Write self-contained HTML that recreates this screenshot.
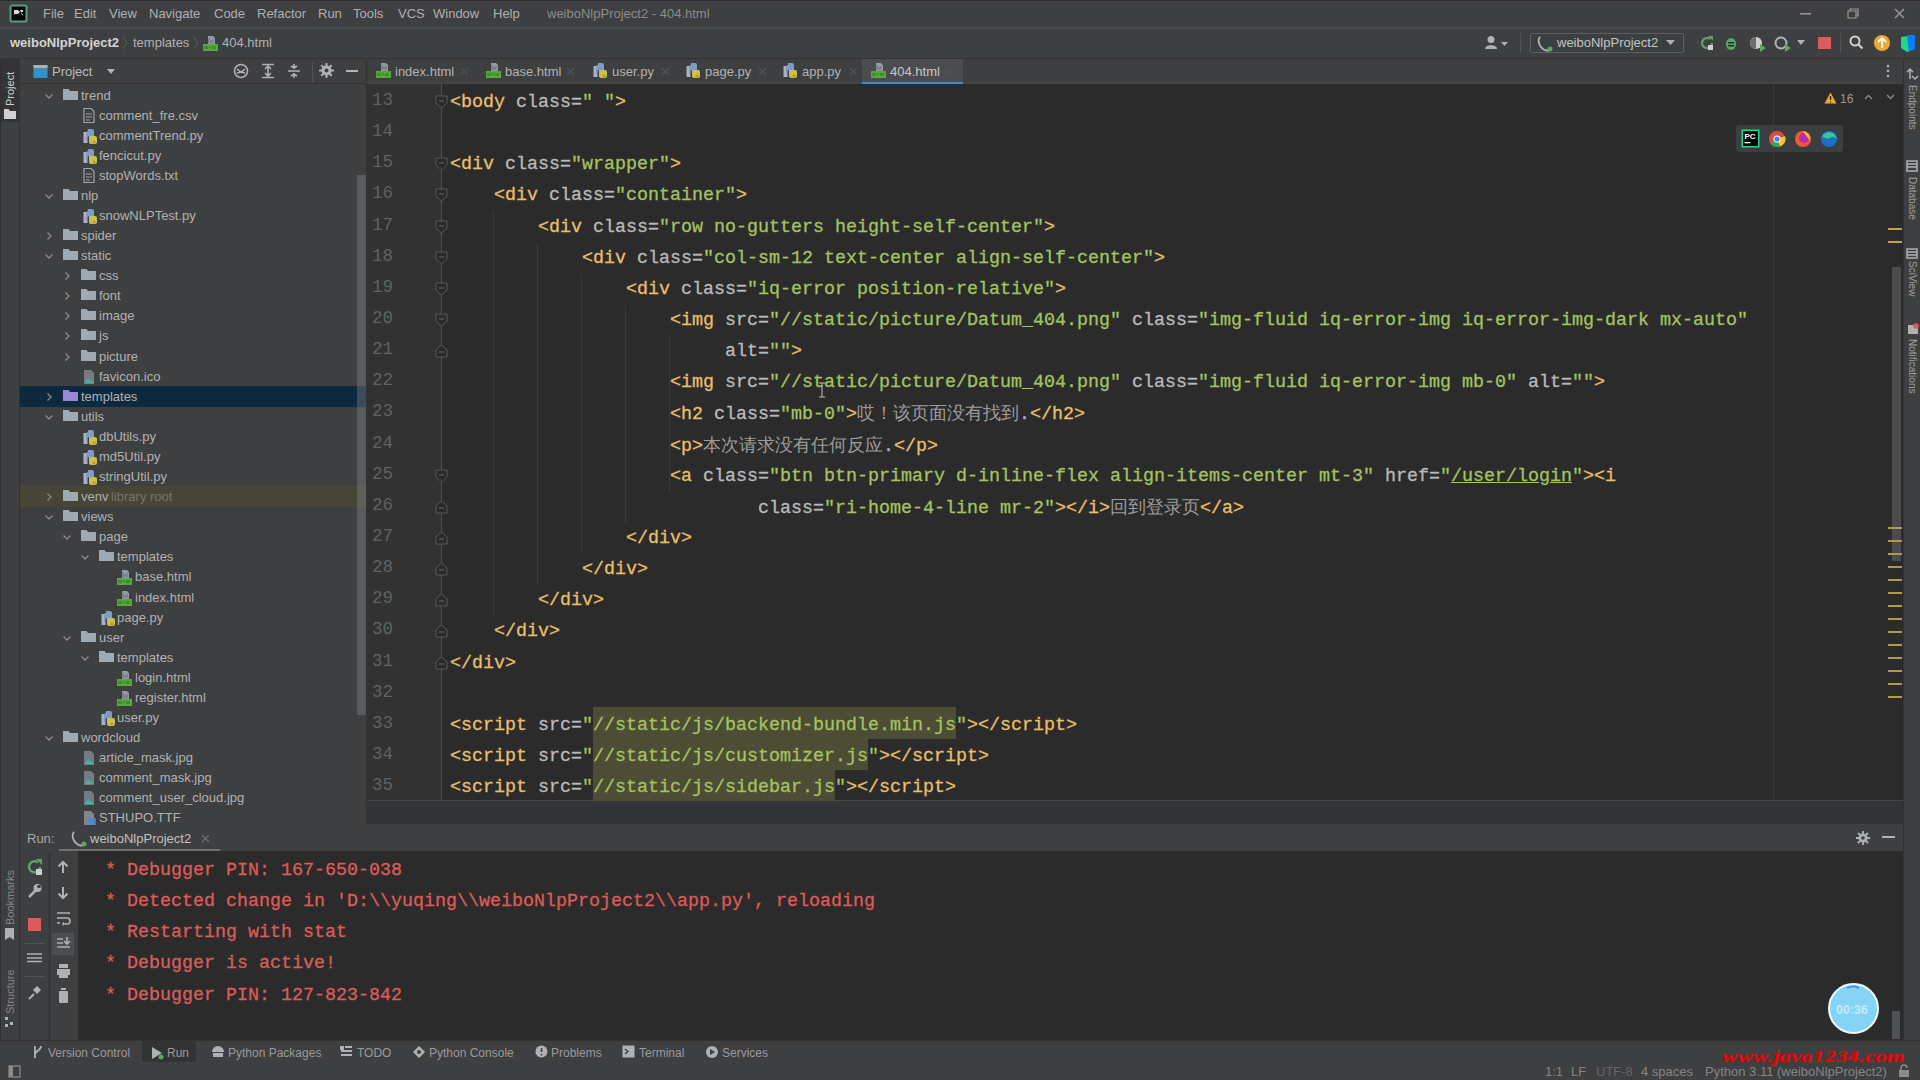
<!DOCTYPE html><html><head><meta charset="utf-8"><title>PyCharm</title><style>
*{margin:0;padding:0;box-sizing:border-box}
html,body{width:1920px;height:1080px;overflow:hidden;background:#3e3f41;font-family:"Liberation Sans",sans-serif;font-size:13px;color:#b2b2b2}
.a{position:absolute}
.t{position:absolute;white-space:pre;line-height:16px}
.s{position:absolute;overflow:visible}
.code{position:absolute;white-space:pre;font-family:"Liberation Mono",monospace;font-size:18.33px;line-height:31px;height:31px;-webkit-text-stroke:0.3px currentColor}
.tg{color:#e8bf6a}
.at{color:#bababa}
.vl{color:#a5c261}
.tx{color:#a9b7c6}
.cj{font-size:17.5px;font-family:"Liberation Serif",serif;-webkit-text-stroke:0;color:#9c9c9c}
.ln{position:absolute;font-family:"Liberation Mono",monospace;font-size:17.5px;color:#5f6265;width:40px;text-align:right;line-height:31px}
.con{position:absolute;white-space:pre;font-family:"Liberation Mono",monospace;font-size:18.33px;line-height:31px;color:#dc5c59;-webkit-text-stroke:0.3px currentColor}
.vt{position:absolute;white-space:pre;font-size:11px;line-height:12px;transform-origin:0 0}
</style></head><body>
<div class="a" style="left:0px;top:0px;width:1920px;height:1px;background:#2b2b2b;"></div>
<div class="a" style="left:0px;top:1px;width:1920px;height:27px;background:#3e3f41;"></div>
<div class="a" style="left:0px;top:1px;width:1920px;height:2px;background:#434447;"></div>
<div class="a" style="left:0px;top:27px;width:1920px;height:2px;background:#4a4b4d;"></div>
<div class="a" style="left:0px;top:29px;width:1920px;height:29px;background:#3e3f41;"></div>
<div class="a" style="left:0px;top:58px;width:1920px;height:1px;background:#323232;"></div>
<div class="a" style="left:0px;top:59px;width:20px;height:981px;background:#3e3f41;"></div>
<div class="a" style="left:0px;top:59px;width:1px;height:1021px;background:#2e3032;"></div>
<div class="a" style="left:19px;top:59px;width:1px;height:981px;background:#323232;"></div>
<div class="a" style="left:1px;top:59px;width:18px;height:63px;background:#333436;"></div>
<div class="a" style="left:20px;top:59px;width:346px;height:766px;background:#3e3f41;"></div>
<div class="a" style="left:20px;top:83px;width:346px;height:1px;background:#323232;"></div>
<div class="a" style="left:366px;top:59px;width:1537px;height:25px;background:#3e3f41;"></div>
<div class="a" style="left:366px;top:82px;width:1537px;height:2px;background:#434446;"></div>
<div class="a" style="left:366px;top:59px;width:1px;height:766px;background:#323232;"></div>
<div class="a" style="left:862px;top:59px;width:101px;height:24px;background:#4a4c4f;"></div>
<div class="a" style="left:862px;top:82px;width:101px;height:3px;background:#4a88c7;"></div>
<div class="a" style="left:367px;top:84px;width:75px;height:716px;background:#323233;"></div>
<div class="a" style="left:442px;top:84px;width:1461px;height:716px;background:#2b2b2b;"></div>
<div class="a" style="left:367px;top:800px;width:1536px;height:1px;background:#45484a;"></div>
<div class="a" style="left:367px;top:801px;width:1536px;height:23px;background:#323436;"></div>
<div class="a" style="left:20px;top:825px;width:1883px;height:26px;background:#3e3f41;"></div>
<div class="a" style="left:59px;top:849px;width:161px;height:2px;background:#6d6f71;"></div>
<div class="a" style="left:20px;top:851px;width:58px;height:189px;background:#3e3f41;"></div>
<div class="a" style="left:49px;top:851px;width:1px;height:189px;background:#323232;"></div>
<div class="a" style="left:78px;top:851px;width:1825px;height:189px;background:#2b2b2b;"></div>
<div class="a" style="left:52px;top:933px;width:22px;height:22px;background:#4b4e50;"></div>
<div class="a" style="left:1892px;top:1011px;width:8px;height:28px;background:#4e5254;"></div>
<div class="a" style="left:1903px;top:59px;width:17px;height:981px;background:#3e3f41;"></div>
<div class="a" style="left:1903px;top:59px;width:1px;height:981px;background:#323232;"></div>
<div class="a" style="left:0px;top:1040px;width:1920px;height:1px;background:#323232;"></div>
<div class="a" style="left:0px;top:1041px;width:1920px;height:39px;background:#3e3f41;"></div>
<div class="a" style="left:142px;top:1041px;width:54px;height:21px;background:#313335;"></div>
<svg class="s" style="left:9px;top:4px;" width="19" height="19" viewBox="0 0 19 19"><rect x="0.5" y="0.5" width="18" height="18" rx="2.5" fill="#5e9a82"/><rect x="2.5" y="2.5" width="14" height="14" fill="#020a06"/><path d="M5 11V6h4l2 2-2 2H6z M11 6h3v2h-2v2h2v2" fill="#d8d8d8"/></svg>
<div class="t" style="left:43px;top:6px;color:#b0b0b0">File</div>
<div class="t" style="left:74px;top:6px;color:#b0b0b0">Edit</div>
<div class="t" style="left:109px;top:6px;color:#b0b0b0">View</div>
<div class="t" style="left:149px;top:6px;color:#b0b0b0">Navigate</div>
<div class="t" style="left:214px;top:6px;color:#b0b0b0">Code</div>
<div class="t" style="left:257px;top:6px;color:#b0b0b0">Refactor</div>
<div class="t" style="left:318px;top:6px;color:#b0b0b0">Run</div>
<div class="t" style="left:353px;top:6px;color:#b0b0b0">Tools</div>
<div class="t" style="left:398px;top:6px;color:#b0b0b0">VCS</div>
<div class="t" style="left:433px;top:6px;color:#b0b0b0">Window</div>
<div class="t" style="left:493px;top:6px;color:#b0b0b0">Help</div>
<div class="t" style="left:547px;top:6px;color:#8c8c8c">weiboNlpProject2 - 404.html</div>
<svg class="s" style="left:1800px;top:13px;" width="12" height="3" viewBox="0 0 12 3"><rect width="11" height="1.5" fill="#9a9a9a"/></svg>
<svg class="s" style="left:1847px;top:8px;" width="13" height="11" viewBox="0 0 13 11"><path d="M1 3h8v7H1z M3 3V1h8v7H9" fill="none" stroke="#9a9a9a" stroke-width="1.2"/></svg>
<svg class="s" style="left:1894px;top:8px;" width="11" height="11" viewBox="0 0 11 11"><path d="M1 1l9 9M10 1l-9 9" stroke="#9a9a9a" stroke-width="1.4"/></svg>
<div class="t" style="left:10px;top:35px;color:#d4d4d4;font-weight:bold">weiboNlpProject2</div>
<svg class="s" style="left:122px;top:36px;" width="6" height="14" viewBox="0 0 6 14"><path d="M1 1l4 6-4 6" stroke="#5e6060" fill="none"/></svg>
<div class="t" style="left:133px;top:35px;">templates</div>
<svg class="s" style="left:193px;top:36px;" width="6" height="14" viewBox="0 0 6 14"><path d="M1 1l4 6-4 6" stroke="#5e6060" fill="none"/></svg>
<svg class="s" style="left:203px;top:35px;" width="15" height="16" viewBox="0 0 15 16"><path d="M5 1h5l2 2V9H5z" fill="#a7b0c0" opacity="0.8"/><path d="M6 3v5M8 5v3M10 4v4" stroke="#5a6070" stroke-width="0.8"/><rect x="0" y="9" width="15" height="7" fill="#56a83c"/><path d="M2 11v3M4 11v3M6 12h2M10 11v3M12 11v3" stroke="#2f5f22" stroke-width="0.8"/></svg>
<div class="t" style="left:222px;top:35px;">404.html</div>
<svg class="s" style="left:1484px;top:35px;" width="26" height="16" viewBox="0 0 26 16"><circle cx="7" cy="4.5" r="3.5" fill="#afb1b3"/><path d="M1 14c0-5 12-5 12 0z" fill="#afb1b3"/><path d="M17 7l3.5 4 3.5-4z" fill="#afb1b3"/></svg>
<div class="a" style="left:1520px;top:33px;width:1px;height:20px;background:#505254;"></div>
<div class="a" style="left:1530px;top:33px;width:154px;height:20px;background:#3c3f41;border:1px solid #5e6060;border-radius:2px"></div>
<svg class="s" style="left:1537px;top:35px;" width="18" height="17" viewBox="0 0 18 17"><path d="M3 2c-2 2-2 6 1 10s7 4 8 3" stroke="#afb1b3" stroke-width="2" fill="none"/><circle cx="13" cy="14" r="2.5" fill="#59a869"/></svg>
<div class="t" style="left:1557px;top:35px;color:#c4c4c4">weiboNlpProject2</div>
<svg class="s" style="left:1666px;top:40px;" width="10" height="6" viewBox="0 0 10 6"><path d="M0 0h9l-4.5 5z" fill="#afb1b3"/></svg>
<svg class="s" style="left:1699px;top:35px;" width="16" height="16" viewBox="0 0 16 16"><path d="M13 8a5 5 0 1 1-2-4" stroke="#59a869" stroke-width="2.2" fill="none"/><path d="M9 1h5v5z" fill="#59a869"/><rect x="9" y="10" width="5" height="5" fill="#d0d0d0"/></svg>
<svg class="s" style="left:1724px;top:35px;" width="14" height="16" viewBox="0 0 14 16"><ellipse cx="7" cy="9" rx="5" ry="6" fill="#59a869"/><rect x="4" y="7" width="6" height="1.5" fill="#2b2b2b"/><rect x="4" y="10" width="6" height="1.5" fill="#2b2b2b"/></svg>
<svg class="s" style="left:1749px;top:35px;" width="18" height="17" viewBox="0 0 18 17"><circle cx="7" cy="8" r="6" fill="#d0d0d0"/><path d="M7 2a6 6 0 0 0 0 12z" fill="#6e6e6e"/><path d="M11 9l6 4-6 4z" fill="#59a869"/></svg>
<svg class="s" style="left:1774px;top:35px;" width="18" height="17" viewBox="0 0 18 17"><circle cx="7" cy="8" r="5.5" fill="none" stroke="#afb1b3" stroke-width="2"/><path d="M11 9l6 4-6 4z" fill="#59a869"/></svg>
<svg class="s" style="left:1797px;top:40px;" width="9" height="6" viewBox="0 0 9 6"><path d="M0 0h8l-4 5z" fill="#afb1b3"/></svg>
<div class="a" style="left:1818px;top:37px;width:13px;height:12px;background:#db5c5c;"></div>
<div class="a" style="left:1840px;top:33px;width:1px;height:20px;background:#505254;"></div>
<svg class="s" style="left:1849px;top:35px;" width="15" height="15" viewBox="0 0 15 15"><circle cx="6" cy="6" r="4.5" fill="none" stroke="#d0d0d0" stroke-width="2"/><path d="M9.5 9.5l4 4" stroke="#d0d0d0" stroke-width="2.2"/></svg>
<svg class="s" style="left:1873px;top:34px;" width="18" height="18" viewBox="0 0 18 18"><circle cx="9" cy="9" r="8" fill="#f0a732"/><path d="M9 4v10M5 8l4-4 4 4" stroke="#fff" stroke-width="1.8" fill="none"/></svg>
<svg class="s" style="left:1899px;top:34px;" width="18" height="18" viewBox="0 0 18 18"><path d="M2 3l14-2v14l-8 3-6-4z" fill="#21d789"/><path d="M8 1l8 0v14l-6 3z" fill="#087cfa"/></svg>
<svg class="s" style="left:33px;top:64px;" width="15" height="15" viewBox="0 0 15 15"><rect x="0.5" y="1" width="14" height="13" fill="#3592c4"/><rect x="0.5" y="1" width="14" height="3" fill="#afb1b3"/></svg>
<div class="t" style="left:52px;top:64px;color:#bbbbbb">Project</div>
<svg class="s" style="left:107px;top:69px;" width="9" height="6" viewBox="0 0 9 6"><path d="M0 0h8l-4 5z" fill="#afb1b3"/></svg>
<svg class="s" style="left:233px;top:63px;" width="16" height="16" viewBox="0 0 16 16"><circle cx="8" cy="8" r="6.5" fill="none" stroke="#afb1b3" stroke-width="1.6"/><path d="M4 6l4 3 4-3M4 10l4-1 4 1" stroke="#afb1b3" stroke-width="1.4" fill="none"/></svg>
<svg class="s" style="left:261px;top:63px;" width="14" height="16" viewBox="0 0 14 16"><path d="M1 1.5h12M1 14.5h12M7 4v8M4 6l3-3 3 3M4 10l3 3 3-3" stroke="#afb1b3" stroke-width="1.6" fill="none"/></svg>
<svg class="s" style="left:287px;top:63px;" width="14" height="16" viewBox="0 0 14 16"><path d="M1 8h12M7 1v4M7 11v4M4 3l3 2 3-2M4 13l3-2 3 2" stroke="#afb1b3" stroke-width="1.6" fill="none"/></svg>
<div class="a" style="left:312px;top:62px;width:1px;height:20px;background:#505254;"></div>
<svg class="s" style="left:319px;top:63px;" width="15" height="15" viewBox="0 0 15 15"><circle cx="7.5" cy="7.5" r="5" fill="#afb1b3"/><circle cx="7.5" cy="7.5" r="2" fill="#3c3f41"/><path d="M7.5 0v3M7.5 12v3M0 7.5h3M12 7.5h3M2.3 2.3l2 2M10.7 10.7l2 2M2.3 12.7l2-2M10.7 4.3l2-2" stroke="#afb1b3" stroke-width="2"/></svg>
<div class="a" style="left:346px;top:70px;width:12px;height:2px;background:#afb1b3;"></div>
<div class="vt" style="left:4px;top:106px;transform:rotate(-90deg);color:#d0d0d0">Project</div>
<svg class="s" style="left:4px;top:109px;" width="12" height="10" viewBox="0 0 12 10"><path d="M0 0h4.5l1.5 2H12V10H0z" fill="#d0d0d0"/></svg>
<div class="vt" style="left:4px;top:925px;transform:rotate(-90deg);color:#858585;font-size:11px">Bookmarks</div>
<svg class="s" style="left:4px;top:928px;" width="11" height="12" viewBox="0 0 11 12"><path d="M1 0h9v12l-4.5-3L1 12z" fill="#afb1b3"/></svg>
<div class="vt" style="left:4px;top:1014px;transform:rotate(-90deg);color:#858585;font-size:11px">Structure</div>
<svg class="s" style="left:4px;top:1015px;" width="11" height="13" viewBox="0 0 11 13"><path d="M1 2h3v3H1zM6 7h3v3H6zM1 9h3v3H1z" fill="#afb1b3"/></svg>
<svg class="s" style="left:8px;top:1065px;" width="14" height="13" viewBox="0 0 14 13"><rect x="1" y="1" width="11" height="11" fill="none" stroke="#8c8c8c" stroke-width="1.2"/><rect x="1" y="1" width="4" height="11" fill="#8c8c8c"/></svg>
<svg class="s" style="left:44px;top:91px;" width="10" height="10" viewBox="0 0 10 10"><path d="M1.5 3.5l3.5 3.5 3.5-3.5" stroke="#8c8c8c" stroke-width="1.3" fill="none"/></svg>
<svg class="s" style="left:63px;top:89px;" width="15" height="11" viewBox="0 0 15 11"><path d="M0 0h5.5l1.5 2H15V11H0z" fill="#9fabb4"/></svg>
<div class="t" style="left:81px;top:88px;">trend</div>
<svg class="s" style="left:83px;top:108px;" width="12" height="15" viewBox="0 0 12 15"><path d="M1 0.5h7l3 3V14.5H1z" fill="none" stroke="#9aa7b0" stroke-width="1.2"/><path d="M3 6h6M3 9h6M3 12h4" stroke="#9aa7b0" stroke-width="1"/></svg>
<div class="t" style="left:99px;top:108px;">comment_fre.csv</div>
<svg class="s" style="left:83px;top:128px;" width="14" height="16" viewBox="0 0 14 16"><path d="M0.5 4h4v11h-4z" fill="#a9b3c6"/><path d="M5 1h4a2 2 0 0 1 2 2v5H6a2 2 0 0 0-2 2v2H3V5a2 2 0 0 1 2-2z" fill="#7f9cc8"/><path d="M6 8h6a2 2 0 0 1 2 2v4a2 2 0 0 1-2 2H8a2 2 0 0 1-2-2z" fill="#c6c24a"/><circle cx="11" cy="14" r="1.5" fill="#d08a3a"/></svg>
<div class="t" style="left:99px;top:128px;">commentTrend.py</div>
<svg class="s" style="left:83px;top:148px;" width="14" height="16" viewBox="0 0 14 16"><path d="M0.5 4h4v11h-4z" fill="#a9b3c6"/><path d="M5 1h4a2 2 0 0 1 2 2v5H6a2 2 0 0 0-2 2v2H3V5a2 2 0 0 1 2-2z" fill="#7f9cc8"/><path d="M6 8h6a2 2 0 0 1 2 2v4a2 2 0 0 1-2 2H8a2 2 0 0 1-2-2z" fill="#c6c24a"/><circle cx="11" cy="14" r="1.5" fill="#d08a3a"/></svg>
<div class="t" style="left:99px;top:148px;">fencicut.py</div>
<svg class="s" style="left:83px;top:168px;" width="12" height="15" viewBox="0 0 12 15"><path d="M1 0.5h7l3 3V14.5H1z" fill="none" stroke="#9aa7b0" stroke-width="1.2"/><path d="M3 6h6M3 9h6M3 12h4" stroke="#9aa7b0" stroke-width="1"/></svg>
<div class="t" style="left:99px;top:168px;">stopWords.txt</div>
<svg class="s" style="left:44px;top:191px;" width="10" height="10" viewBox="0 0 10 10"><path d="M1.5 3.5l3.5 3.5 3.5-3.5" stroke="#8c8c8c" stroke-width="1.3" fill="none"/></svg>
<svg class="s" style="left:63px;top:189px;" width="15" height="11" viewBox="0 0 15 11"><path d="M0 0h5.5l1.5 2H15V11H0z" fill="#9fabb4"/></svg>
<div class="t" style="left:81px;top:188px;">nlp</div>
<svg class="s" style="left:83px;top:208px;" width="14" height="16" viewBox="0 0 14 16"><path d="M0.5 4h4v11h-4z" fill="#a9b3c6"/><path d="M5 1h4a2 2 0 0 1 2 2v5H6a2 2 0 0 0-2 2v2H3V5a2 2 0 0 1 2-2z" fill="#7f9cc8"/><path d="M6 8h6a2 2 0 0 1 2 2v4a2 2 0 0 1-2 2H8a2 2 0 0 1-2-2z" fill="#c6c24a"/><circle cx="11" cy="14" r="1.5" fill="#d08a3a"/></svg>
<div class="t" style="left:99px;top:208px;">snowNLPTest.py</div>
<svg class="s" style="left:44px;top:231px;" width="10" height="10" viewBox="0 0 10 10"><path d="M3.5 1.5l3.5 3.5-3.5 3.5" stroke="#8c8c8c" stroke-width="1.3" fill="none"/></svg>
<svg class="s" style="left:63px;top:229px;" width="15" height="11" viewBox="0 0 15 11"><path d="M0 0h5.5l1.5 2H15V11H0z" fill="#9fabb4"/></svg>
<div class="t" style="left:81px;top:228px;">spider</div>
<svg class="s" style="left:44px;top:251px;" width="10" height="10" viewBox="0 0 10 10"><path d="M1.5 3.5l3.5 3.5 3.5-3.5" stroke="#8c8c8c" stroke-width="1.3" fill="none"/></svg>
<svg class="s" style="left:63px;top:249px;" width="15" height="11" viewBox="0 0 15 11"><path d="M0 0h5.5l1.5 2H15V11H0z" fill="#9fabb4"/></svg>
<div class="t" style="left:81px;top:248px;">static</div>
<svg class="s" style="left:62px;top:271px;" width="10" height="10" viewBox="0 0 10 10"><path d="M3.5 1.5l3.5 3.5-3.5 3.5" stroke="#8c8c8c" stroke-width="1.3" fill="none"/></svg>
<svg class="s" style="left:81px;top:269px;" width="15" height="11" viewBox="0 0 15 11"><path d="M0 0h5.5l1.5 2H15V11H0z" fill="#9fabb4"/></svg>
<div class="t" style="left:99px;top:268px;">css</div>
<svg class="s" style="left:62px;top:291px;" width="10" height="10" viewBox="0 0 10 10"><path d="M3.5 1.5l3.5 3.5-3.5 3.5" stroke="#8c8c8c" stroke-width="1.3" fill="none"/></svg>
<svg class="s" style="left:81px;top:289px;" width="15" height="11" viewBox="0 0 15 11"><path d="M0 0h5.5l1.5 2H15V11H0z" fill="#9fabb4"/></svg>
<div class="t" style="left:99px;top:288px;">font</div>
<svg class="s" style="left:62px;top:311px;" width="10" height="10" viewBox="0 0 10 10"><path d="M3.5 1.5l3.5 3.5-3.5 3.5" stroke="#8c8c8c" stroke-width="1.3" fill="none"/></svg>
<svg class="s" style="left:81px;top:309px;" width="15" height="11" viewBox="0 0 15 11"><path d="M0 0h5.5l1.5 2H15V11H0z" fill="#9fabb4"/></svg>
<div class="t" style="left:99px;top:308px;">image</div>
<svg class="s" style="left:62px;top:331px;" width="10" height="10" viewBox="0 0 10 10"><path d="M3.5 1.5l3.5 3.5-3.5 3.5" stroke="#8c8c8c" stroke-width="1.3" fill="none"/></svg>
<svg class="s" style="left:81px;top:329px;" width="15" height="11" viewBox="0 0 15 11"><path d="M0 0h5.5l1.5 2H15V11H0z" fill="#9fabb4"/></svg>
<div class="t" style="left:99px;top:328px;">js</div>
<svg class="s" style="left:62px;top:352px;" width="10" height="10" viewBox="0 0 10 10"><path d="M3.5 1.5l3.5 3.5-3.5 3.5" stroke="#8c8c8c" stroke-width="1.3" fill="none"/></svg>
<svg class="s" style="left:81px;top:350px;" width="15" height="11" viewBox="0 0 15 11"><path d="M0 0h5.5l1.5 2H15V11H0z" fill="#9fabb4"/></svg>
<div class="t" style="left:99px;top:349px;">picture</div>
<svg class="s" style="left:83px;top:369px;" width="12" height="16" viewBox="0 0 12 16"><path d="M1 1h7l3 3V15H1z" fill="#9aa7b0" opacity="0.6"/><path d="M2 14l3-5 2 3 1-1 3 3z" fill="#40b6a0"/></svg>
<div class="t" style="left:99px;top:369px;">favicon.ico</div>
<div class="a" style="left:20px;top:386px;width:346px;height:21px;background:#0d293e;"></div>
<svg class="s" style="left:44px;top:392px;" width="10" height="10" viewBox="0 0 10 10"><path d="M3.5 1.5l3.5 3.5-3.5 3.5" stroke="#8c8c8c" stroke-width="1.3" fill="none"/></svg>
<svg class="s" style="left:63px;top:390px;" width="15" height="11" viewBox="0 0 15 11"><path d="M0 0h5.5l1.5 2H15V11H0z" fill="#9a87d6"/></svg>
<div class="t" style="left:81px;top:389px;">templates</div>
<svg class="s" style="left:44px;top:412px;" width="10" height="10" viewBox="0 0 10 10"><path d="M1.5 3.5l3.5 3.5 3.5-3.5" stroke="#8c8c8c" stroke-width="1.3" fill="none"/></svg>
<svg class="s" style="left:63px;top:410px;" width="15" height="11" viewBox="0 0 15 11"><path d="M0 0h5.5l1.5 2H15V11H0z" fill="#9fabb4"/></svg>
<div class="t" style="left:81px;top:409px;">utils</div>
<svg class="s" style="left:83px;top:429px;" width="14" height="16" viewBox="0 0 14 16"><path d="M0.5 4h4v11h-4z" fill="#a9b3c6"/><path d="M5 1h4a2 2 0 0 1 2 2v5H6a2 2 0 0 0-2 2v2H3V5a2 2 0 0 1 2-2z" fill="#7f9cc8"/><path d="M6 8h6a2 2 0 0 1 2 2v4a2 2 0 0 1-2 2H8a2 2 0 0 1-2-2z" fill="#c6c24a"/><circle cx="11" cy="14" r="1.5" fill="#d08a3a"/></svg>
<div class="t" style="left:99px;top:429px;">dbUtils.py</div>
<svg class="s" style="left:83px;top:449px;" width="14" height="16" viewBox="0 0 14 16"><path d="M0.5 4h4v11h-4z" fill="#a9b3c6"/><path d="M5 1h4a2 2 0 0 1 2 2v5H6a2 2 0 0 0-2 2v2H3V5a2 2 0 0 1 2-2z" fill="#7f9cc8"/><path d="M6 8h6a2 2 0 0 1 2 2v4a2 2 0 0 1-2 2H8a2 2 0 0 1-2-2z" fill="#c6c24a"/><circle cx="11" cy="14" r="1.5" fill="#d08a3a"/></svg>
<div class="t" style="left:99px;top:449px;">md5Util.py</div>
<svg class="s" style="left:83px;top:469px;" width="14" height="16" viewBox="0 0 14 16"><path d="M0.5 4h4v11h-4z" fill="#a9b3c6"/><path d="M5 1h4a2 2 0 0 1 2 2v5H6a2 2 0 0 0-2 2v2H3V5a2 2 0 0 1 2-2z" fill="#7f9cc8"/><path d="M6 8h6a2 2 0 0 1 2 2v4a2 2 0 0 1-2 2H8a2 2 0 0 1-2-2z" fill="#c6c24a"/><circle cx="11" cy="14" r="1.5" fill="#d08a3a"/></svg>
<div class="t" style="left:99px;top:469px;">stringUtil.py</div>
<div class="a" style="left:20px;top:486px;width:346px;height:21px;background:#464536;"></div>
<svg class="s" style="left:44px;top:492px;" width="10" height="10" viewBox="0 0 10 10"><path d="M3.5 1.5l3.5 3.5-3.5 3.5" stroke="#8c8c8c" stroke-width="1.3" fill="none"/></svg>
<svg class="s" style="left:63px;top:490px;" width="15" height="11" viewBox="0 0 15 11"><path d="M0 0h5.5l1.5 2H15V11H0z" fill="#9fabb4"/></svg>
<div class="t" style="left:81px;top:489px;">venv</div>
<div class="t" style="left:111px;top:489px;color:#76766a">library root</div>
<svg class="s" style="left:44px;top:512px;" width="10" height="10" viewBox="0 0 10 10"><path d="M1.5 3.5l3.5 3.5 3.5-3.5" stroke="#8c8c8c" stroke-width="1.3" fill="none"/></svg>
<svg class="s" style="left:63px;top:510px;" width="15" height="11" viewBox="0 0 15 11"><path d="M0 0h5.5l1.5 2H15V11H0z" fill="#9fabb4"/></svg>
<div class="t" style="left:81px;top:509px;">views</div>
<svg class="s" style="left:62px;top:532px;" width="10" height="10" viewBox="0 0 10 10"><path d="M1.5 3.5l3.5 3.5 3.5-3.5" stroke="#8c8c8c" stroke-width="1.3" fill="none"/></svg>
<svg class="s" style="left:81px;top:530px;" width="15" height="11" viewBox="0 0 15 11"><path d="M0 0h5.5l1.5 2H15V11H0z" fill="#9fabb4"/></svg>
<div class="t" style="left:99px;top:529px;">page</div>
<svg class="s" style="left:80px;top:552px;" width="10" height="10" viewBox="0 0 10 10"><path d="M1.5 3.5l3.5 3.5 3.5-3.5" stroke="#8c8c8c" stroke-width="1.3" fill="none"/></svg>
<svg class="s" style="left:99px;top:550px;" width="15" height="11" viewBox="0 0 15 11"><path d="M0 0h5.5l1.5 2H15V11H0z" fill="#9fabb4"/></svg>
<div class="t" style="left:117px;top:549px;">templates</div>
<svg class="s" style="left:117px;top:569px;" width="15" height="16" viewBox="0 0 15 16"><path d="M5 1h5l2 2V9H5z" fill="#a7b0c0" opacity="0.8"/><path d="M6 3v5M8 5v3M10 4v4" stroke="#5a6070" stroke-width="0.8"/><rect x="0" y="9" width="15" height="7" fill="#56a83c"/><path d="M2 11v3M4 11v3M6 12h2M10 11v3M12 11v3" stroke="#2f5f22" stroke-width="0.8"/></svg>
<div class="t" style="left:135px;top:569px;">base.html</div>
<svg class="s" style="left:117px;top:590px;" width="15" height="16" viewBox="0 0 15 16"><path d="M5 1h5l2 2V9H5z" fill="#a7b0c0" opacity="0.8"/><path d="M6 3v5M8 5v3M10 4v4" stroke="#5a6070" stroke-width="0.8"/><rect x="0" y="9" width="15" height="7" fill="#56a83c"/><path d="M2 11v3M4 11v3M6 12h2M10 11v3M12 11v3" stroke="#2f5f22" stroke-width="0.8"/></svg>
<div class="t" style="left:135px;top:590px;">index.html</div>
<svg class="s" style="left:101px;top:610px;" width="14" height="16" viewBox="0 0 14 16"><path d="M0.5 4h4v11h-4z" fill="#a9b3c6"/><path d="M5 1h4a2 2 0 0 1 2 2v5H6a2 2 0 0 0-2 2v2H3V5a2 2 0 0 1 2-2z" fill="#7f9cc8"/><path d="M6 8h6a2 2 0 0 1 2 2v4a2 2 0 0 1-2 2H8a2 2 0 0 1-2-2z" fill="#c6c24a"/><circle cx="11" cy="14" r="1.5" fill="#d08a3a"/></svg>
<div class="t" style="left:117px;top:610px;">page.py</div>
<svg class="s" style="left:62px;top:633px;" width="10" height="10" viewBox="0 0 10 10"><path d="M1.5 3.5l3.5 3.5 3.5-3.5" stroke="#8c8c8c" stroke-width="1.3" fill="none"/></svg>
<svg class="s" style="left:81px;top:631px;" width="15" height="11" viewBox="0 0 15 11"><path d="M0 0h5.5l1.5 2H15V11H0z" fill="#9fabb4"/></svg>
<div class="t" style="left:99px;top:630px;">user</div>
<svg class="s" style="left:80px;top:653px;" width="10" height="10" viewBox="0 0 10 10"><path d="M1.5 3.5l3.5 3.5 3.5-3.5" stroke="#8c8c8c" stroke-width="1.3" fill="none"/></svg>
<svg class="s" style="left:99px;top:651px;" width="15" height="11" viewBox="0 0 15 11"><path d="M0 0h5.5l1.5 2H15V11H0z" fill="#9fabb4"/></svg>
<div class="t" style="left:117px;top:650px;">templates</div>
<svg class="s" style="left:117px;top:670px;" width="15" height="16" viewBox="0 0 15 16"><path d="M5 1h5l2 2V9H5z" fill="#a7b0c0" opacity="0.8"/><path d="M6 3v5M8 5v3M10 4v4" stroke="#5a6070" stroke-width="0.8"/><rect x="0" y="9" width="15" height="7" fill="#56a83c"/><path d="M2 11v3M4 11v3M6 12h2M10 11v3M12 11v3" stroke="#2f5f22" stroke-width="0.8"/></svg>
<div class="t" style="left:135px;top:670px;">login.html</div>
<svg class="s" style="left:117px;top:690px;" width="15" height="16" viewBox="0 0 15 16"><path d="M5 1h5l2 2V9H5z" fill="#a7b0c0" opacity="0.8"/><path d="M6 3v5M8 5v3M10 4v4" stroke="#5a6070" stroke-width="0.8"/><rect x="0" y="9" width="15" height="7" fill="#56a83c"/><path d="M2 11v3M4 11v3M6 12h2M10 11v3M12 11v3" stroke="#2f5f22" stroke-width="0.8"/></svg>
<div class="t" style="left:135px;top:690px;">register.html</div>
<svg class="s" style="left:101px;top:710px;" width="14" height="16" viewBox="0 0 14 16"><path d="M0.5 4h4v11h-4z" fill="#a9b3c6"/><path d="M5 1h4a2 2 0 0 1 2 2v5H6a2 2 0 0 0-2 2v2H3V5a2 2 0 0 1 2-2z" fill="#7f9cc8"/><path d="M6 8h6a2 2 0 0 1 2 2v4a2 2 0 0 1-2 2H8a2 2 0 0 1-2-2z" fill="#c6c24a"/><circle cx="11" cy="14" r="1.5" fill="#d08a3a"/></svg>
<div class="t" style="left:117px;top:710px;">user.py</div>
<svg class="s" style="left:44px;top:733px;" width="10" height="10" viewBox="0 0 10 10"><path d="M1.5 3.5l3.5 3.5 3.5-3.5" stroke="#8c8c8c" stroke-width="1.3" fill="none"/></svg>
<svg class="s" style="left:63px;top:731px;" width="15" height="11" viewBox="0 0 15 11"><path d="M0 0h5.5l1.5 2H15V11H0z" fill="#9fabb4"/></svg>
<div class="t" style="left:81px;top:730px;">wordcloud</div>
<svg class="s" style="left:83px;top:750px;" width="12" height="16" viewBox="0 0 12 16"><path d="M1 1h7l3 3V15H1z" fill="#9aa7b0" opacity="0.6"/><path d="M2 14l3-5 2 3 1-1 3 3z" fill="#40b6a0"/></svg>
<div class="t" style="left:99px;top:750px;">article_mask.jpg</div>
<svg class="s" style="left:83px;top:770px;" width="12" height="16" viewBox="0 0 12 16"><path d="M1 1h7l3 3V15H1z" fill="#9aa7b0" opacity="0.6"/><path d="M2 14l3-5 2 3 1-1 3 3z" fill="#40b6a0"/></svg>
<div class="t" style="left:99px;top:770px;">comment_mask.jpg</div>
<svg class="s" style="left:83px;top:790px;" width="12" height="16" viewBox="0 0 12 16"><path d="M1 1h7l3 3V15H1z" fill="#9aa7b0" opacity="0.6"/><path d="M2 14l3-5 2 3 1-1 3 3z" fill="#40b6a0"/></svg>
<div class="t" style="left:99px;top:790px;">comment_user_cloud.jpg</div>
<svg class="s" style="left:83px;top:810px;" width="14" height="16" viewBox="0 0 14 16"><path d="M1 1h7l3 3V15H1z" fill="#9aa7b0" opacity="0.7"/><path d="M5 8h8v7H5z" fill="#4a8ad0" opacity="0.8"/></svg>
<div class="t" style="left:99px;top:810px;">STHUPO.TTF</div>
<div class="a" style="left:357px;top:175px;width:9px;height:540px;background:rgba(140,145,150,0.35);"></div>
<svg class="s" style="left:376px;top:62px;" width="15" height="16" viewBox="0 0 15 16"><path d="M5 1h5l2 2V9H5z" fill="#a7b0c0" opacity="0.8"/><path d="M6 3v5M8 5v3M10 4v4" stroke="#5a6070" stroke-width="0.8"/><rect x="0" y="9" width="15" height="7" fill="#56a83c"/><path d="M2 11v3M4 11v3M6 12h2M10 11v3M12 11v3" stroke="#2f5f22" stroke-width="0.8"/></svg>
<div class="t" style="left:395px;top:64px;">index.html</div>
<svg class="s" style="left:460px;top:67px;" width="9" height="9" viewBox="0 0 9 9"><path d="M1 1l7 7M8 1l-7 7" stroke="#505254" stroke-width="1.2"/></svg>
<svg class="s" style="left:486px;top:62px;" width="15" height="16" viewBox="0 0 15 16"><path d="M5 1h5l2 2V9H5z" fill="#a7b0c0" opacity="0.8"/><path d="M6 3v5M8 5v3M10 4v4" stroke="#5a6070" stroke-width="0.8"/><rect x="0" y="9" width="15" height="7" fill="#56a83c"/><path d="M2 11v3M4 11v3M6 12h2M10 11v3M12 11v3" stroke="#2f5f22" stroke-width="0.8"/></svg>
<div class="t" style="left:505px;top:64px;">base.html</div>
<svg class="s" style="left:566px;top:67px;" width="9" height="9" viewBox="0 0 9 9"><path d="M1 1l7 7M8 1l-7 7" stroke="#505254" stroke-width="1.2"/></svg>
<svg class="s" style="left:593px;top:62px;" width="14" height="16" viewBox="0 0 14 16"><path d="M0.5 4h4v11h-4z" fill="#a9b3c6"/><path d="M5 1h4a2 2 0 0 1 2 2v5H6a2 2 0 0 0-2 2v2H3V5a2 2 0 0 1 2-2z" fill="#7f9cc8"/><path d="M6 8h6a2 2 0 0 1 2 2v4a2 2 0 0 1-2 2H8a2 2 0 0 1-2-2z" fill="#c6c24a"/><circle cx="11" cy="14" r="1.5" fill="#d08a3a"/></svg>
<div class="t" style="left:612px;top:64px;">user.py</div>
<svg class="s" style="left:661px;top:67px;" width="9" height="9" viewBox="0 0 9 9"><path d="M1 1l7 7M8 1l-7 7" stroke="#505254" stroke-width="1.2"/></svg>
<svg class="s" style="left:686px;top:62px;" width="14" height="16" viewBox="0 0 14 16"><path d="M0.5 4h4v11h-4z" fill="#a9b3c6"/><path d="M5 1h4a2 2 0 0 1 2 2v5H6a2 2 0 0 0-2 2v2H3V5a2 2 0 0 1 2-2z" fill="#7f9cc8"/><path d="M6 8h6a2 2 0 0 1 2 2v4a2 2 0 0 1-2 2H8a2 2 0 0 1-2-2z" fill="#c6c24a"/><circle cx="11" cy="14" r="1.5" fill="#d08a3a"/></svg>
<div class="t" style="left:705px;top:64px;">page.py</div>
<svg class="s" style="left:758px;top:67px;" width="9" height="9" viewBox="0 0 9 9"><path d="M1 1l7 7M8 1l-7 7" stroke="#505254" stroke-width="1.2"/></svg>
<svg class="s" style="left:783px;top:62px;" width="14" height="16" viewBox="0 0 14 16"><path d="M0.5 4h4v11h-4z" fill="#a9b3c6"/><path d="M5 1h4a2 2 0 0 1 2 2v5H6a2 2 0 0 0-2 2v2H3V5a2 2 0 0 1 2-2z" fill="#7f9cc8"/><path d="M6 8h6a2 2 0 0 1 2 2v4a2 2 0 0 1-2 2H8a2 2 0 0 1-2-2z" fill="#c6c24a"/><circle cx="11" cy="14" r="1.5" fill="#d08a3a"/></svg>
<div class="t" style="left:802px;top:64px;">app.py</div>
<svg class="s" style="left:849px;top:67px;" width="9" height="9" viewBox="0 0 9 9"><path d="M1 1l7 7M8 1l-7 7" stroke="#505254" stroke-width="1.2"/></svg>
<svg class="s" style="left:871px;top:62px;" width="15" height="16" viewBox="0 0 15 16"><path d="M5 1h5l2 2V9H5z" fill="#a7b0c0" opacity="0.8"/><path d="M6 3v5M8 5v3M10 4v4" stroke="#5a6070" stroke-width="0.8"/><rect x="0" y="9" width="15" height="7" fill="#56a83c"/><path d="M2 11v3M4 11v3M6 12h2M10 11v3M12 11v3" stroke="#2f5f22" stroke-width="0.8"/></svg>
<div class="t" style="left:890px;top:64px;color:#c8c8c8">404.html</div>
<svg class="s" style="left:945px;top:67px;" width="9" height="9" viewBox="0 0 9 9"><path d="M1 1l7 7M8 1l-7 7" stroke="#505254" stroke-width="1.2"/></svg>
<svg class="s" style="left:1886px;top:64px;" width="4" height="14" viewBox="0 0 4 14"><circle cx="2" cy="2" r="1.3" fill="#afb1b3"/><circle cx="2" cy="7" r="1.3" fill="#afb1b3"/><circle cx="2" cy="12" r="1.3" fill="#afb1b3"/></svg>
<div class="a" style="left:493px;top:211px;width:1px;height:405px;background:#393939;"></div>
<div class="a" style="left:537px;top:243px;width:1px;height:343px;background:#393939;"></div>
<div class="a" style="left:581px;top:274px;width:1px;height:280px;background:#393939;"></div>
<div class="a" style="left:625px;top:305px;width:1px;height:218px;background:#393939;"></div>
<div class="a" style="left:669px;top:336px;width:1px;height:156px;background:#393939;"></div>
<div class="a" style="left:1773px;top:84px;width:1px;height:716px;background:#3a3a3a;"></div>
<div class="a" style="left:441px;top:84px;width:1px;height:716px;background:#4b4d4f;"></div>
<svg class="s" style="left:435px;top:95px;" width="13" height="14" viewBox="0 0 13 14"><path d="M1 1h11v7l-5.5 5L1 8z" fill="#2a2a2a" stroke="#58595b" stroke-width="1"/><path d="M4 6h5" stroke="#6a6a6a"/></svg>
<svg class="s" style="left:435px;top:157px;" width="13" height="14" viewBox="0 0 13 14"><path d="M1 1h11v7l-5.5 5L1 8z" fill="#2a2a2a" stroke="#58595b" stroke-width="1"/><path d="M4 6h5" stroke="#6a6a6a"/></svg>
<svg class="s" style="left:435px;top:188px;" width="13" height="14" viewBox="0 0 13 14"><path d="M1 1h11v7l-5.5 5L1 8z" fill="#2a2a2a" stroke="#58595b" stroke-width="1"/><path d="M4 6h5" stroke="#6a6a6a"/></svg>
<svg class="s" style="left:435px;top:220px;" width="13" height="14" viewBox="0 0 13 14"><path d="M1 1h11v7l-5.5 5L1 8z" fill="#2a2a2a" stroke="#58595b" stroke-width="1"/><path d="M4 6h5" stroke="#6a6a6a"/></svg>
<svg class="s" style="left:435px;top:251px;" width="13" height="14" viewBox="0 0 13 14"><path d="M1 1h11v7l-5.5 5L1 8z" fill="#2a2a2a" stroke="#58595b" stroke-width="1"/><path d="M4 6h5" stroke="#6a6a6a"/></svg>
<svg class="s" style="left:435px;top:282px;" width="13" height="14" viewBox="0 0 13 14"><path d="M1 1h11v7l-5.5 5L1 8z" fill="#2a2a2a" stroke="#58595b" stroke-width="1"/><path d="M4 6h5" stroke="#6a6a6a"/></svg>
<svg class="s" style="left:435px;top:313px;" width="13" height="14" viewBox="0 0 13 14"><path d="M1 1h11v7l-5.5 5L1 8z" fill="#2a2a2a" stroke="#58595b" stroke-width="1"/><path d="M4 6h5" stroke="#6a6a6a"/></svg>
<svg class="s" style="left:435px;top:344px;" width="13" height="14" viewBox="0 0 13 14"><path d="M1 13h11V6L6.5 1 1 6z" fill="#2a2a2a" stroke="#58595b" stroke-width="1"/><path d="M4 8h5" stroke="#6a6a6a"/></svg>
<svg class="s" style="left:435px;top:469px;" width="13" height="14" viewBox="0 0 13 14"><path d="M1 1h11v7l-5.5 5L1 8z" fill="#2a2a2a" stroke="#58595b" stroke-width="1"/><path d="M4 6h5" stroke="#6a6a6a"/></svg>
<svg class="s" style="left:435px;top:500px;" width="13" height="14" viewBox="0 0 13 14"><path d="M1 13h11V6L6.5 1 1 6z" fill="#2a2a2a" stroke="#58595b" stroke-width="1"/><path d="M4 8h5" stroke="#6a6a6a"/></svg>
<svg class="s" style="left:435px;top:531px;" width="13" height="14" viewBox="0 0 13 14"><path d="M1 13h11V6L6.5 1 1 6z" fill="#2a2a2a" stroke="#58595b" stroke-width="1"/><path d="M4 8h5" stroke="#6a6a6a"/></svg>
<svg class="s" style="left:435px;top:562px;" width="13" height="14" viewBox="0 0 13 14"><path d="M1 13h11V6L6.5 1 1 6z" fill="#2a2a2a" stroke="#58595b" stroke-width="1"/><path d="M4 8h5" stroke="#6a6a6a"/></svg>
<svg class="s" style="left:435px;top:593px;" width="13" height="14" viewBox="0 0 13 14"><path d="M1 13h11V6L6.5 1 1 6z" fill="#2a2a2a" stroke="#58595b" stroke-width="1"/><path d="M4 8h5" stroke="#6a6a6a"/></svg>
<svg class="s" style="left:435px;top:624px;" width="13" height="14" viewBox="0 0 13 14"><path d="M1 13h11V6L6.5 1 1 6z" fill="#2a2a2a" stroke="#58595b" stroke-width="1"/><path d="M4 8h5" stroke="#6a6a6a"/></svg>
<svg class="s" style="left:435px;top:656px;" width="13" height="14" viewBox="0 0 13 14"><path d="M1 13h11V6L6.5 1 1 6z" fill="#2a2a2a" stroke="#58595b" stroke-width="1"/><path d="M4 8h5" stroke="#6a6a6a"/></svg>
<div class="ln" style="left:353px;top:85.0px">13</div>
<div class="ln" style="left:353px;top:116.1px">14</div>
<div class="ln" style="left:353px;top:147.3px">15</div>
<div class="ln" style="left:353px;top:178.4px">16</div>
<div class="ln" style="left:353px;top:209.6px">17</div>
<div class="ln" style="left:353px;top:240.7px">18</div>
<div class="ln" style="left:353px;top:271.8px">19</div>
<div class="ln" style="left:353px;top:303.0px">20</div>
<div class="ln" style="left:353px;top:334.1px">21</div>
<div class="ln" style="left:353px;top:365.3px">22</div>
<div class="ln" style="left:353px;top:396.4px">23</div>
<div class="ln" style="left:353px;top:427.5px">24</div>
<div class="ln" style="left:353px;top:458.7px">25</div>
<div class="ln" style="left:353px;top:489.8px">26</div>
<div class="ln" style="left:353px;top:521.0px">27</div>
<div class="ln" style="left:353px;top:552.1px">28</div>
<div class="ln" style="left:353px;top:583.2px">29</div>
<div class="ln" style="left:353px;top:614.4px">30</div>
<div class="ln" style="left:353px;top:645.5px">31</div>
<div class="ln" style="left:353px;top:676.7px">32</div>
<div class="ln" style="left:353px;top:707.8px">33</div>
<div class="ln" style="left:353px;top:738.9px">34</div>
<div class="ln" style="left:353px;top:770.1px">35</div>
<div class="a" style="left:593px;top:707px;width:363px;height:32px;background:#4d4c35;"></div>
<div class="a" style="left:593px;top:738px;width:275px;height:32px;background:#4d4c35;"></div>
<div class="a" style="left:593px;top:769px;width:242px;height:32px;background:#4d4c35;"></div>
<div class="code" style="left:450px;top:87.0px"><span class="tg">&lt;body</span><span class="at"> class</span><span class="at">=</span><span class="vl">" "</span><span class="tg">&gt;</span></div>
<div class="code" style="left:450px;top:149.3px"><span class="tg">&lt;div</span><span class="at"> class</span><span class="at">=</span><span class="vl">"wrapper"</span><span class="tg">&gt;</span></div>
<div class="code" style="left:494px;top:180.4px"><span class="tg">&lt;div</span><span class="at"> class</span><span class="at">=</span><span class="vl">"container"</span><span class="tg">&gt;</span></div>
<div class="code" style="left:538px;top:211.6px"><span class="tg">&lt;div</span><span class="at"> class</span><span class="at">=</span><span class="vl">"row no-gutters height-self-center"</span><span class="tg">&gt;</span></div>
<div class="code" style="left:582px;top:242.7px"><span class="tg">&lt;div</span><span class="at"> class</span><span class="at">=</span><span class="vl">"col-sm-12 text-center align-self-center"</span><span class="tg">&gt;</span></div>
<div class="code" style="left:626px;top:273.8px"><span class="tg">&lt;div</span><span class="at"> class</span><span class="at">=</span><span class="vl">"iq-error position-relative"</span><span class="tg">&gt;</span></div>
<div class="code" style="left:670px;top:305.0px"><span class="tg">&lt;img</span><span class="at"> src</span><span class="at">=</span><span class="vl">"//static/picture/Datum_404.png"</span><span class="at"> class</span><span class="at">=</span><span class="vl">"img-fluid iq-error-img iq-error-img-dark mx-auto"</span></div>
<div class="code" style="left:725px;top:336.1px"><span class="at">alt</span><span class="at">=</span><span class="vl">""</span><span class="tg">&gt;</span></div>
<div class="code" style="left:670px;top:367.3px"><span class="tg">&lt;img</span><span class="at"> src</span><span class="at">=</span><span class="vl">"//static/picture/Datum_404.png"</span><span class="at"> class</span><span class="at">=</span><span class="vl">"img-fluid iq-error-img mb-0"</span><span class="at"> alt</span><span class="at">=</span><span class="vl">""</span><span class="tg">&gt;</span></div>
<div class="code" style="left:626px;top:523.0px"><span class="tg">&lt;/div</span><span class="tg">&gt;</span></div>
<div class="code" style="left:582px;top:554.1px"><span class="tg">&lt;/div</span><span class="tg">&gt;</span></div>
<div class="code" style="left:538px;top:585.2px"><span class="tg">&lt;/div</span><span class="tg">&gt;</span></div>
<div class="code" style="left:494px;top:616.4px"><span class="tg">&lt;/div</span><span class="tg">&gt;</span></div>
<div class="code" style="left:450px;top:647.5px"><span class="tg">&lt;/div</span><span class="tg">&gt;</span></div>
<div class="code" style="left:450px;top:709.8px"><span class="tg">&lt;script</span><span class="at"> src</span><span class="at">=</span><span class="vl">"//static/js/backend-bundle.min.js"</span><span class="tg">&gt;</span><span class="tg">&lt;/script</span><span class="tg">&gt;</span></div>
<div class="code" style="left:450px;top:740.9px"><span class="tg">&lt;script</span><span class="at"> src</span><span class="at">=</span><span class="vl">"//static/js/customizer.js"</span><span class="tg">&gt;</span><span class="tg">&lt;/script</span><span class="tg">&gt;</span></div>
<div class="code" style="left:450px;top:772.1px"><span class="tg">&lt;script</span><span class="at"> src</span><span class="at">=</span><span class="vl">"//static/js/sidebar.js"</span><span class="tg">&gt;</span><span class="tg">&lt;/script</span><span class="tg">&gt;</span></div>
<div class="code" style="left:670px;top:398.4px"><span class="tg">&lt;h2</span><span class="at"> class=</span><span class="vl">"mb-0"</span><span class="tg">&gt;</span><span class="tx cj">哎！该页面没有找到</span><span class="tx">.</span><span class="tg">&lt;/h2&gt;</span></div>
<div class="code" style="left:670px;top:429.5px"><span class="tg">&lt;p&gt;</span><span class="tx cj">本次请求没有任何反应</span><span class="tx">.</span><span class="tg">&lt;/p&gt;</span></div>
<div class="code" style="left:670px;top:460.7px"><span class="tg">&lt;a</span><span class="at"> class=</span><span class="vl">"btn btn-primary d-inline-flex align-items-center mt-3"</span><span class="at"> href=</span><span class="vl">"<u>/user/login</u>"</span><span class="tg">&gt;&lt;i</span></div>
<div class="code" style="left:758px;top:491.8px"><span class="at">class=</span><span class="vl">"ri-home-4-line mr-2"</span><span class="tg">&gt;&lt;/i&gt;</span><span class="tx cj">回到登录页</span><span class="tg">&lt;/a&gt;</span></div>
<svg class="s" style="left:818px;top:382px;" width="8" height="16" viewBox="0 0 8 16"><path d="M1 1h6M4 1v14M1 15h6" stroke="#c0c0c0" stroke-width="1"/></svg>
<svg class="s" style="left:1824px;top:92px;" width="13" height="12" viewBox="0 0 13 12"><path d="M6.5 0.5L12.5 11.5H0.5z" fill="#f0a732"/><path d="M6.5 4v4M6.5 9.5v1" stroke="#2b2b2b" stroke-width="1.4"/></svg>
<div class="t" style="left:1840px;top:91px;font-size:12px;color:#9a9a9a">16</div>
<svg class="s" style="left:1864px;top:94px;" width="9" height="6" viewBox="0 0 9 6"><path d="M1 5l3.5-3.5L8 5" stroke="#8c8c8c" stroke-width="1.3" fill="none"/></svg>
<svg class="s" style="left:1886px;top:94px;" width="9" height="6" viewBox="0 0 9 6"><path d="M1 1l3.5 3.5L8 1" stroke="#8c8c8c" stroke-width="1.3" fill="none"/></svg>
<div class="a" style="left:1736px;top:125px;width:107px;height:27px;background:#3c3f41;border-radius:3px"></div>
<svg class="s" style="left:1741px;top:129px;" width="19" height="19" viewBox="0 0 19 19"><rect x="0.5" y="0.5" width="18" height="18" fill="#21d789"/><rect x="2" y="2" width="15" height="15" fill="#000"/><text x="3.5" y="10" font-size="8" font-family="Liberation Sans" font-weight="bold" fill="#fff">PC</text><rect x="3.5" y="13" width="6" height="1.3" fill="#fff"/></svg>
<svg class="s" style="left:1768px;top:130px;" width="18" height="18" viewBox="0 0 18 18"><circle cx="9" cy="9" r="8" fill="#e04a3a"/><path d="M9 9L2 13A8 8 0 0 0 12 16.5z" fill="#30a853"/><path d="M9 9L12 16.5A8 8 0 0 0 17 6z" fill="#fbc02d"/><circle cx="9" cy="9" r="3.5" fill="#fff"/><circle cx="9" cy="9" r="2.6" fill="#4285f4"/></svg>
<svg class="s" style="left:1794px;top:129px;" width="18" height="19" viewBox="0 0 18 19"><circle cx="9" cy="10" r="8" fill="#f35a2b"/><circle cx="10" cy="9" r="5" fill="#b42db0"/><path d="M9 2c5 1 8 5 7 10-2-4-5-6-7-10z" fill="#ffbd2e"/></svg>
<svg class="s" style="left:1820px;top:129px;" width="18" height="19" viewBox="0 0 18 19"><circle cx="9" cy="10" r="8" fill="#1b6fc8"/><path d="M2 8c2-6 13-7 15 2-2-2-6-3-8 0" fill="#37c6a0"/><circle cx="11" cy="12" r="3" fill="#1b6fc8"/></svg>
<div class="a" style="left:1892px;top:267px;width:9px;height:294px;background:#4a4c4e;"></div>
<div class="a" style="left:1888px;top:228px;width:14px;height:2px;background:#c7a03a;"></div>
<div class="a" style="left:1888px;top:241px;width:14px;height:2px;background:#c7a03a;"></div>
<div class="a" style="left:1888px;top:527px;width:14px;height:2px;background:#b39b45;"></div>
<div class="a" style="left:1888px;top:540px;width:14px;height:2px;background:#b39b45;"></div>
<div class="a" style="left:1888px;top:553px;width:14px;height:2px;background:#b39b45;"></div>
<div class="a" style="left:1888px;top:566px;width:14px;height:2px;background:#b39b45;"></div>
<div class="a" style="left:1888px;top:579px;width:14px;height:2px;background:#b39b45;"></div>
<div class="a" style="left:1888px;top:592px;width:14px;height:2px;background:#b39b45;"></div>
<div class="a" style="left:1888px;top:605px;width:14px;height:2px;background:#b39b45;"></div>
<div class="a" style="left:1888px;top:618px;width:14px;height:2px;background:#b39b45;"></div>
<div class="a" style="left:1888px;top:631px;width:14px;height:2px;background:#b39b45;"></div>
<div class="a" style="left:1888px;top:644px;width:14px;height:2px;background:#b39b45;"></div>
<div class="a" style="left:1888px;top:657px;width:14px;height:2px;background:#b39b45;"></div>
<div class="a" style="left:1888px;top:670px;width:14px;height:2px;background:#b39b45;"></div>
<div class="a" style="left:1888px;top:683px;width:14px;height:2px;background:#b39b45;"></div>
<div class="a" style="left:1888px;top:696px;width:14px;height:2px;background:#b39b45;"></div>
<svg class="s" style="left:1906px;top:68px;" width="12" height="12" viewBox="0 0 12 12"><path d="M1 4l3-3 3 3M4 1v10M6 8l3 3 3-3" stroke="#afb1b3" stroke-width="1.5" fill="none"/></svg>
<div class="vt" style="top:85px;transform:rotate(90deg);left:1918px;color:#a0a0a0;font-size:10px">Endpoints</div>
<svg class="s" style="left:1906px;top:160px;" width="12" height="12" viewBox="0 0 12 12"><path d="M1 1h10v10H1zM1 4h10M1 7h10" stroke="#afb1b3" stroke-width="1.5" fill="none"/></svg>
<div class="vt" style="top:177px;transform:rotate(90deg);left:1918px;color:#a0a0a0;font-size:10px">Database</div>
<svg class="s" style="left:1906px;top:248px;" width="12" height="11" viewBox="0 0 12 11"><path d="M1 1h10v9H1zM1 4h10M1 7h10" stroke="#afb1b3" stroke-width="1.5" fill="none"/></svg>
<div class="vt" style="top:261px;transform:rotate(90deg);left:1918px;color:#a0a0a0;font-size:10px">SciView</div>
<svg class="s" style="left:1906px;top:322px;" width="13" height="13" viewBox="0 0 13 13"><path d="M2 3h8l2 3v6H2z" fill="#afb1b3"/><circle cx="10" cy="4" r="2.8" fill="#db5c5c"/></svg>
<div class="vt" style="top:339px;transform:rotate(90deg);left:1918px;color:#a0a0a0;font-size:10px">Notifications</div>
<div class="t" style="left:27px;top:831px;color:#a8a8a8">Run:</div>
<svg class="s" style="left:71px;top:830px;" width="18" height="17" viewBox="0 0 18 17"><path d="M3 2c-2 2-2 6 1 10s7 4 8 3" stroke="#afb1b3" stroke-width="2" fill="none"/><circle cx="13" cy="14" r="2.5" fill="#59a869"/></svg>
<div class="t" style="left:90px;top:831px;color:#c0c0c0">weiboNlpProject2</div>
<svg class="s" style="left:201px;top:834px;" width="9" height="9" viewBox="0 0 9 9"><path d="M1 1l7 7M8 1l-7 7" stroke="#6e7072" stroke-width="1.2"/></svg>
<svg class="s" style="left:1856px;top:831px;" width="14" height="14" viewBox="0 0 14 14"><circle cx="7" cy="7" r="4.5" fill="#afb1b3"/><circle cx="7" cy="7" r="1.8" fill="#3c3f41"/><path d="M7 0v3M7 11v3M0 7h3M11 7h3M2 2l2 2M10 10l2 2M2 12l2-2M10 4l2-2" stroke="#afb1b3" stroke-width="1.8"/></svg>
<div class="a" style="left:1882px;top:836px;width:13px;height:2px;background:#afb1b3;"></div>
<svg class="s" style="left:27px;top:858px;" width="16" height="18" viewBox="0 0 16 18"><path d="M13 9a5.5 5.5 0 1 1-2-4.5" stroke="#59a869" stroke-width="2.4" fill="none"/><path d="M9 1h6v6z" fill="#59a869"/><rect x="9" y="11" width="6" height="6" fill="#d0d0d0"/></svg>
<svg class="s" style="left:27px;top:883px;" width="15" height="16" viewBox="0 0 15 16"><path d="M2 14l7-7" stroke="#afb1b3" stroke-width="2.5"/><circle cx="10.5" cy="5" r="4" fill="#afb1b3"/><circle cx="12" cy="3.5" r="1.8" fill="#3c3f41"/></svg>
<div class="a" style="left:28px;top:918px;width:13px;height:13px;background:#db5c5c;"></div>
<div class="a" style="left:25px;top:943px;width:20px;height:1px;background:#505254;"></div>
<svg class="s" style="left:27px;top:953px;" width="15" height="9" viewBox="0 0 15 9"><path d="M0 1h15M0 5h15M0 8.5h15" stroke="#afb1b3" stroke-width="1.5"/></svg>
<div class="a" style="left:25px;top:976px;width:20px;height:1px;background:#505254;"></div>
<svg class="s" style="left:27px;top:984px;" width="15" height="16" viewBox="0 0 15 16"><path d="M2 15l5-5" stroke="#afb1b3" stroke-width="2"/><path d="M6 6l4-4 4 4-4 4z" fill="#afb1b3"/></svg>
<svg class="s" style="left:57px;top:860px;" width="12" height="14" viewBox="0 0 12 14"><path d="M6 2v11M1.5 6.5L6 2l4.5 4.5" stroke="#afb1b3" stroke-width="2" fill="none"/></svg>
<svg class="s" style="left:57px;top:886px;" width="12" height="14" viewBox="0 0 12 14"><path d="M6 1v11M1.5 7.5L6 12l4.5-4.5" stroke="#afb1b3" stroke-width="2" fill="none"/></svg>
<svg class="s" style="left:56px;top:911px;" width="15" height="15" viewBox="0 0 15 15"><path d="M1 2h13M1 7h10a3 3 0 0 1 0 6H7M1 12h3" stroke="#afb1b3" stroke-width="1.6" fill="none"/><path d="M8 10.5l-2 2.5 2 2z" fill="#afb1b3"/></svg>
<svg class="s" style="left:56px;top:936px;" width="15" height="15" viewBox="0 0 15 15"><path d="M1 3h6M1 7h6M1 11h13M11 1v7M8 5l3 3 3-3" stroke="#afb1b3" stroke-width="1.6" fill="none"/></svg>
<svg class="s" style="left:56px;top:963px;" width="15" height="15" viewBox="0 0 15 15"><rect x="3" y="1" width="9" height="4" fill="#afb1b3"/><rect x="1" y="6" width="13" height="6" fill="#afb1b3"/><rect x="3" y="10" width="9" height="5" fill="#afb1b3"/></svg>
<svg class="s" style="left:58px;top:987px;" width="11" height="16" viewBox="0 0 11 16"><rect x="1" y="4" width="9" height="12" rx="1" fill="#afb1b3"/><rect x="3" y="1" width="5" height="2" fill="#afb1b3"/></svg>
<div class="con" style="left:105px;top:854.5px">* Debugger PIN: 167-650-038</div>
<div class="con" style="left:105px;top:885.8px">* Detected change in 'D:\\yuqing\\weiboNlpProject2\\app.py', reloading</div>
<div class="con" style="left:105px;top:917.0px">* Restarting with stat</div>
<div class="con" style="left:105px;top:948.2px">* Debugger is active!</div>
<div class="con" style="left:105px;top:979.5px">* Debugger PIN: 127-823-842</div>
<div class="a" style="left:1828px;top:983px;width:51px;height:51px;border-radius:50%;background:#86d4f5;border:2px solid #eef8ff"></div>
<svg class="s" style="left:1846px;top:985px;" width="14" height="4" viewBox="0 0 14 4"><path d="M1 3a14 14 0 0 1 12 0" stroke="#4a90e8" stroke-width="2" fill="none"/></svg>
<div class="t" style="left:1836px;top:1001.5px;font-size:12.5px;color:#c4ecfc;font-weight:bold">00:36</div>
<div class="t" style="left:48px;top:1045px;font-size:12px;color:#9a9a9a">Version Control</div>
<div class="t" style="left:167px;top:1045px;font-size:12px;color:#9a9a9a">Run</div>
<div class="t" style="left:228px;top:1045px;font-size:12px;color:#9a9a9a">Python Packages</div>
<div class="t" style="left:357px;top:1045px;font-size:12px;color:#9a9a9a">TODO</div>
<div class="t" style="left:429px;top:1045px;font-size:12px;color:#9a9a9a">Python Console</div>
<div class="t" style="left:551px;top:1045px;font-size:12px;color:#9a9a9a">Problems</div>
<div class="t" style="left:639px;top:1045px;font-size:12px;color:#9a9a9a">Terminal</div>
<div class="t" style="left:722px;top:1045px;font-size:12px;color:#9a9a9a">Services</div>
<svg class="s" style="left:33px;top:1045px;" width="10" height="13" viewBox="0 0 10 13"><path d="M2 1v12M8 1c0 5-6 5-6 8" stroke="#afb1b3" stroke-width="1.8" fill="none"/></svg>
<svg class="s" style="left:151px;top:1046px;" width="13" height="14" viewBox="0 0 13 14"><path d="M1 1l10 6-10 6z" fill="#afb1b3"/><circle cx="10" cy="11" r="2.5" fill="#59a869"/></svg>
<svg class="s" style="left:211px;top:1045px;" width="14" height="13" viewBox="0 0 14 13"><path d="M1 7a6 6 0 0 1 12 0z" fill="#afb1b3"/><rect x="2" y="8" width="10" height="4" fill="#afb1b3"/></svg>
<svg class="s" style="left:340px;top:1046px;" width="13" height="11" viewBox="0 0 13 11"><path d="M1 1h2v2H1zM1 5h11M1 9h11M5 1h7" stroke="#afb1b3" stroke-width="2"/></svg>
<svg class="s" style="left:412px;top:1045px;" width="14" height="14" viewBox="0 0 14 14"><path d="M7 1l6 6-6 6-6-6z" fill="#afb1b3"/><circle cx="7" cy="7" r="2" fill="#3c3f41"/></svg>
<svg class="s" style="left:535px;top:1045px;" width="13" height="13" viewBox="0 0 13 13"><circle cx="6.5" cy="6.5" r="6" fill="#afb1b3"/><path d="M6.5 3v4M6.5 9v1.5" stroke="#3c3f41" stroke-width="1.6"/></svg>
<svg class="s" style="left:622px;top:1045px;" width="13" height="13" viewBox="0 0 13 13"><rect x="0.5" y="0.5" width="12" height="12" fill="#afb1b3"/><path d="M3 4l3 2.5L3 9" stroke="#3c3f41" stroke-width="1.4" fill="none"/></svg>
<svg class="s" style="left:705px;top:1045px;" width="14" height="14" viewBox="0 0 14 14"><circle cx="7" cy="7" r="6" fill="#afb1b3"/><path d="M5 4l5 3-5 3z" fill="#3c3f41"/></svg>
<div class="t" style="left:1545px;top:1064px;font-size:13px;color:#858585">1:1</div>
<div class="t" style="left:1571px;top:1064px;font-size:13px;color:#858585">LF</div>
<div class="t" style="left:1596px;top:1064px;font-size:13px;color:#666666">UTF-8</div>
<div class="t" style="left:1641px;top:1064px;font-size:13px;color:#858585">4 spaces</div>
<div class="t" style="left:1705px;top:1064px;font-size:13px;color:#858585">Python 3.11 (weiboNlpProject2)</div>
<svg class="s" style="left:1898px;top:1064px;" width="12" height="14" viewBox="0 0 12 14"><path d="M3 6V4a3 3 0 0 1 6 0" stroke="#8c8c8c" stroke-width="1.4" fill="none"/><rect x="1" y="6" width="10" height="7" fill="#8c8c8c"/></svg>
<div class="t" style="left:1722px;top:1043.5px;font-family:'Liberation Serif',serif;font-weight:bold;font-style:italic;font-size:17.5px;line-height:24px;color:#f80000;transform:scaleX(1.32);transform-origin:0 0">www.java1234.com</div>
</body></html>
